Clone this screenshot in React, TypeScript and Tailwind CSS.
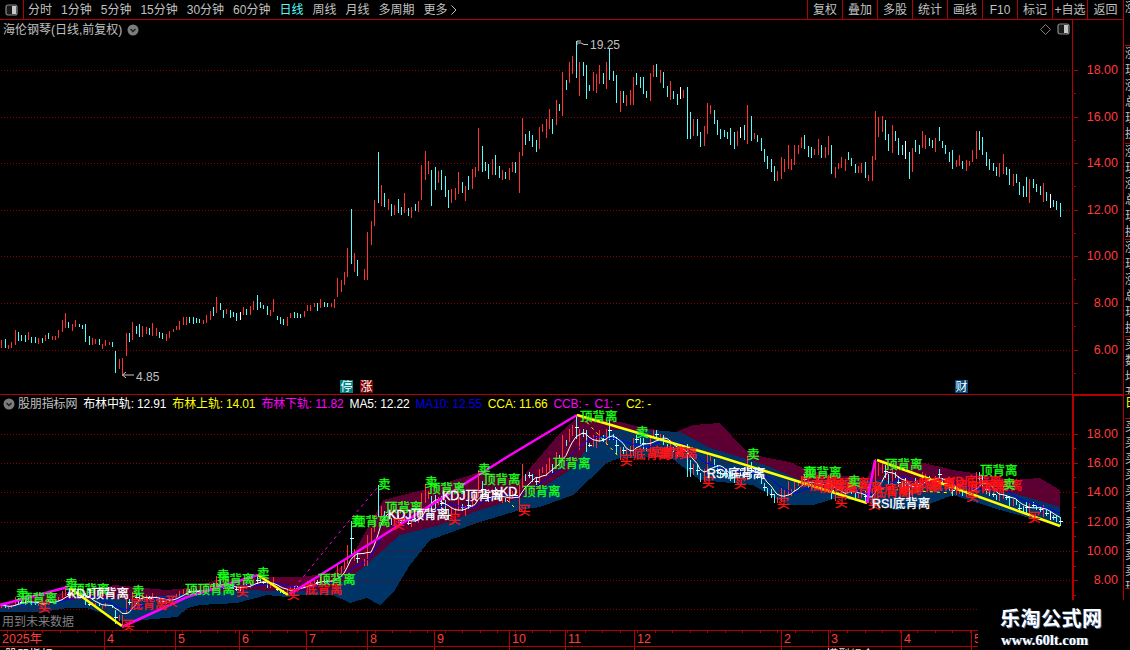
import React from "react";

type Bar = { x: number; t: number; b: number; c: string };

const raw9 =
  "r4,210,233 c16,207,235 r25,225,237 r34,216,235 r46,180,225 c55,186,212 c64,195,212 c76,195,217 r85,186,210 c94,201,219 c106,201,219 r115,204,221 c127,204,219 r136,195,212 c145,189,207 r155,198,210 r166,198,210 r175,180,204 r187,150,186 r196,129,174 c205,156,174 r216,162,183 r226,150,171 c236,162,171 c247,165,177 c256,162,216 c268,198,225 r277,204,225 r286,207,222 c298,207,225 r307,222,237 r316,210,228 r328,216,225 c337,216,231 c346,243,309 r358,267,297 r367,264,318 r379,189,258 c388,189,216 r397,156,210 c409,168,192 c418,162,201 r427,168,201 r439,171,192 c448,174,195 r457,159,198 r469,174,198 c478,186,204 c487,189,207 r499,192,213 r508,183,204 r520,177,186 r529,168,180 r538,153,180 r550,141,165 r559,141,165 c568,141,159 c580,141,162 c589,144,159 c598,147,159 r610,150,162 r619,135,159 r631,123,150 c640,111,138 r649,81,129 c661,99,120 c670,120,144 r679,117,132 c691,120,144 c700,126,141 c709,129,153 w721,126,150 r730,111,135 c739,117,135 r751,108,135 r760,93,120 c772,75,120 c781,96,114 c790,105,117 c802,108,135 r811,120,138 r820,87,126 c832,138,150 c841,141,162 c850,147,165 r862,141,168 r871,129,144 c883,126,144 c892,129,144 c901,132,144 r913,123,141 r922,105,123 r931,105,123 r943,99,111 c952,99,123 r961,87,114 c973,96,111 c982,99,111 r994,99,111 r1003,87,114 r1012,24,81 r1024,30,66 r1033,6,45";
const raw8 =
  "r22,624,711 c34,507,672 r43,639,696 c52,660,708 r73,687,720 r82,576,720 r94,543,615 r103,480,558 c115,336,490 r124,435,498 c133,459,501 r145,477,510 c154,492,528 r163,495,525 c175,477,519 c184,501,525 r193,459,519 c205,504,528 r214,501,534 c226,492,513 r235,483,516 r244,375,480 r256,333,420 r265,363,402 c274,390,498 c286,381,450 r295,393,429 c304,390,450 c316,408,471 c325,450,504 r334,447,489 r346,444,480 r355,396,462 c367,426,459 r376,438,483 c385,408,450 r397,387,447 r406,381,411 r415,264,393 c427,318,396 c436,366,393 c445,372,417 r457,357,405 c466,345,405 c478,378,414 r487,390,420 c496,396,417 r508,384,420 r517,366,396 c526,366,399 r538,336,459 r547,234,348 c556,282,315 c568,273,303 c577,285,321 c589,300,336 r598,261,327 r607,252,276 r619,237,294 r628,207,267 c637,237,282 r649,180,255 c658,192,213 r667,96,228 c679,120,150 r688,66,129 r697,48,102 c709,3,114 r718,66,168 c730,66,108 c739,75,177 c748,135,153 r760,96,153 r769,102,159 r778,75,132 c790,99,132 r799,66,147 c808,27,120 c820,93,123 c829,105,189 r841,153,216 c850,153,189 r859,165,198 r871,150,195 r880,111,195 c889,99,135 c901,111,144 c910,111,162 c919,153,174 r931,99,183 r940,75,111 c949,72,111 r961,90,129 c970,96,144 c982,138,171 r991,123,180 c1000,153,177 c1012,162,195 w1021,141,177 r1030,150,174 c1042,141,297";
const raw10 =
  "c1,36,117 r10,57,108 c22,57,108 c31,96,141 r43,78,138 r52,9,102 r61,15,42 c73,30,72 c82,60,105 c91,87,117 c103,90,111 c112,96,117 c121,84,135 c133,96,147 r142,93,138 w151,81,114 c163,75,120 r172,15,132 c184,48,123 r193,99,117 c202,105,126 c214,114,153 c223,147,186 c232,168,207 c244,177,216 c253,198,243 r262,213,243 r274,171,237 r283,177,216 r295,135,207 r304,177,210 r313,135,195 r325,135,162 r334,111,144 c343,105,147 c355,138,171 c364,141,174 r373,147,165 r385,117,165 c394,135,174 r406,141,174 r415,108,165 c424,135,222 r436,201,234 r445,189,207 r454,171,204 r466,177,213 c475,156,180 c484,174,198 c496,192,219 r505,198,219 r514,189,219 c526,186,234 r535,225,243 r547,168,243 r556,33,180 r565,51,111 r577,48,96 c586,60,120 c595,102,153 r607,75,159 c616,93,123 c625,114,165 c637,135,165 w646,123,177 c658,156,237 r667,144,216 c676,120,156 c688,135,162 r697,93,144 r706,105,147 c718,114,138 c727,120,144 r736,114,156 c748,81,123 c757,123,144 c766,135,162 c778,156,186 c787,150,207 r799,180,201 r808,165,198 c817,183,207 r829,180,213 r838,183,198 r847,150,186 r859,93,177 c868,93,150 c877,111,165 c889,156,198 c898,177,210 c910,189,213 c919,201,228 r928,189,231 r940,162,222 c949,201,225 c958,207,255 r970,222,258 c979,222,249 c988,246,285 c1000,258,291 c1009,231,291 r1018,237,309 c1030,237,264 c1039,252,276 c1051,258,285 r1060,249,306 c1069,276,303 w1081,282,324 c1090,300,321 c1099,303,330 c1111,309,351";

const parse = (s: string, ox: number, oy: number): Bar[] =>
  s.split(" ").map((e) => {
    const [a, t, b] = e.split(",");
    return {
      c: a[0],
      x: Math.round(ox + Number(a.slice(1)) / 3),
      t: oy + Number(t) / 3,
      b: oy + Number(b) / 3,
    };
  });

const bars: Bar[] = [...parse(raw9, 0, 270), ...parse(raw8, 340, 40), ...parse(raw10, 690, 100)];
const toLow = (y: number) => 433.5 + (y - 70) * 0.6285;

const colorOf: Record<string, string> = { r: "#ff3232", c: "#54fcfc", w: "#ffffff" };

const barPath = (key: string, low: boolean) =>
  bars
    .filter((b) => b.c === key)
    .map((b) => {
      const t = low ? toLow(b.t) : b.t;
      const e = low ? toLow(b.b) : b.b;
      return `M${b.x + 0.5} ${t.toFixed(1)}V${e.toFixed(1)}`;
    })
    .join("");

const ticksPath = bars
  .filter((b, i) => b.c !== "r" && i % 2 === 0)
  .map((b) => {
    const y = Math.round(toLow((b.t + b.b) / 2)) + 0.5;
    return `M${b.x - 1} ${y}H${b.x + 3}`;
  })
  .join("");

const maLine = (n: number) => {
  const mids = bars.map((b) => (b.t + b.b) / 2);
  return bars
    .map((b, i) => {
      const s = mids.slice(Math.max(0, i - n + 1), i + 1);
      const m = s.reduce((a, v) => a + v, 0) / s.length;
      return `${b.x},${toLow(m).toFixed(1)}`;
    })
    .join(" ");
};

const maroonTop =
  "0,603 40,596 70,592 100,590 113,585 135,587 166,590 190,588 217,580 267,577 300,577 333,573 350,560 383,500 423,490 480,472 520,480 560,433 580,415 620,422 640,427 673,433 693,425 720,423 745,450 763,457 790,462 807,470 837,475 867,478 877,460 920,462 953,470 973,473 1013,480 1040,478 1060,490";
const boundary =
  "0,607 60,600 110,598 130,600 170,595 250,590 290,592 330,590 360,570 400,535 440,525 480,510 530,495 570,470 590,445 610,430 640,430 680,432 710,448 763,464 800,480 880,480 953,486 1013,493 1060,507";
const blueBottom =
  "0,612 43,612 67,608 87,608 107,615 127,623 143,620 177,617 188,608 200,605 237,603 267,595 287,597 300,595 333,595 350,603 367,598 380,605 395,590 410,565 430,540 480,522 520,510 540,507 573,495 607,463 620,458 670,457 700,480 753,485 773,497 790,505 813,505 837,498 873,503 897,510 927,505 953,495 1000,510 1060,526";
const rev = (s: string) => s.split(" ").reverse().join(" ");

type Label = [string, number, number, string];
const G = "#19ff19";
const R = "#ff1414";
const W = "#ffffff";
const labels: Label[] = [
  ["卖", 16, 595, G],
  ["顶背离", 20, 599, G],
  ["买", 38, 608, R],
  ["卖", 65, 585, G],
  ["顶背离", 72, 590, G],
  ["KDJ顶背离", 68, 594, W],
  ["卖", 132, 592, G],
  ["底背离", 130, 605, R],
  ["买", 122, 626, R],
  ["买", 165, 602, R],
  ["顶顶背离", 185, 590, G],
  ["卖", 217, 576, G],
  ["顶背离", 217, 580, G],
  ["卖", 257, 574, G],
  ["买", 236, 592, R],
  ["买", 287, 595, R],
  ["底背离", 305, 590, R],
  ["顶背离", 318, 580, G],
  ["卖", 351, 522, G],
  ["顶背离", 353, 522, G],
  ["卖", 378, 485, G],
  ["顶背离", 385, 508, G],
  ["KDJ顶背离", 388, 515, W],
  ["买", 392, 525, R],
  ["买", 448, 520, R],
  ["卖", 425, 483, G],
  ["顶背离", 428, 489, G],
  ["KDJ顶背离", 442, 496, W],
  ["卖", 478, 470, G],
  ["顶背离", 483, 480, G],
  ["KD", 500, 492, W],
  ["顶背离", 523, 492, G],
  ["买", 518, 511, R],
  ["顶背离", 553, 464, G],
  ["顶背离", 580, 417, G],
  ["卖", 636, 433, G],
  ["买", 620, 461, R],
  ["底背离", 633, 455, R],
  ["底背离", 650, 453, R],
  ["底背离", 660, 454, R],
  ["买", 702, 483, R],
  ["RSI底背离", 707, 474, W],
  ["卖", 747, 455, G],
  ["买", 734, 484, R],
  ["买", 777, 504, R],
  ["底背离", 800, 482, R],
  ["底背离", 810, 486, R],
  ["底背离", 820, 488, R],
  ["底背离", 832, 484, R],
  ["底背离", 845, 488, R],
  ["卖", 803, 473, G],
  ["顶背离", 804, 473, G],
  ["卖", 848, 482, G],
  ["买", 835, 503, R],
  ["买", 868, 505, R],
  ["底背离", 873, 493, R],
  ["底背离", 884, 490, R],
  ["底背离", 900, 487, R],
  ["底背离", 918, 484, R],
  ["底背离", 930, 486, R],
  ["KD底背离", 947, 482, R],
  ["底背离", 967, 488, R],
  ["底背离", 985, 486, R],
  ["RSI底背离", 872, 504, W],
  ["顶背离", 885, 465, G],
  ["顶背离", 980, 471, G],
  ["卖", 1003, 485, G],
  ["买", 966, 497, R],
  ["买", 1028, 518, R],
];

const toolLeft = ["分时", "1分钟", "5分钟", "15分钟", "30分钟", "60分钟", "日线", "周线", "月线", "多周期"];
const toolRight = ["复权", "叠加", "多股", "统计", "画线", "F10", "标记", "+自选", "返回"];

type Leg = { text: string; color: string };
const legend: Leg[] = [
  { text: "布林中轨: 12.91", color: "#ffffff" },
  { text: "布林上轨: 14.01", color: "#ffff00" },
  { text: "布林下轨: 11.82", color: "#ff00ff" },
  { text: "MA5: 12.22", color: "#ffffff" },
  { text: "MA10: 12.55", color: "#0000e8" },
  { text: "CCA: 11.66", color: "#ffff00" },
  { text: "CCB: -", color: "#ff00ff" },
  { text: "C1: -", color: "#ff00ff" },
  { text: "C2: -", color: "#ffff00" },
];

const DownDot = () => (
  <svg width="12" height="12" viewBox="0 0 12 12" className="shrink-0">
    <circle cx="6" cy="6" r="5.5" fill="#7c7c7c" />
    <path d="M3.5 5l2.5 2.5L8.5 5" fill="none" stroke="#1c1c1c" strokeWidth="1.3" />
  </svg>
);

const PanelIcon = () => (
  <svg width="13" height="12" viewBox="0 0 13 12" className="shrink-0">
    <rect x="1" y="1" width="11" height="10" rx="2" fill="#1a1a1a" stroke="#8a8a8a" strokeWidth="1.2" />
    <rect x="7" y="2" width="4" height="8" fill="#c8c8c8" />
  </svg>
);

const Grid = ({ ys }: { ys: number[] }) => (
  <g stroke="#8c0000" strokeDasharray="1 2" shapeRendering="crispEdges">
    {ys.map((y) => (
      <line key={y} x1="1" x2="1072" y1={Math.round(y) + 0.5} y2={Math.round(y) + 0.5} />
    ))}
  </g>
);

const Axis = ({
  majors,
  top,
  height,
}: {
  majors: [string, number][];
  top: number;
  height: number;
}) => {
  const step = majors[1][1] - majors[0][1];
  return (
    <svg width="49" height={height} viewBox={`1074 ${top} 49 ${height}`} className="block">
      <g stroke="#b40000" shapeRendering="crispEdges">
        {majors.map(([l, y]) => (
          <g key={l}>
            <line x1="1074" x2="1078" y1={Math.round(y) + 0.5} y2={Math.round(y) + 0.5} />
            <line x1="1074" x2="1076" y1={Math.round(y + step / 2) + 0.5} y2={Math.round(y + step / 2) + 0.5} />
          </g>
        ))}
      </g>
      {majors.map(([l, y]) => (
        <text key={l} x="1118" y={y} fill="#ff3c3c" fontSize="12.5" textAnchor="end" dominantBaseline="central">
          {l}
        </text>
      ))}
    </svg>
  );
};

const railTop = ["涨幅", "现价", "涨跌", "总量", "现量", "换手"];
const RailGroup = ({ h, color = "#c0c0c0", rows = railTop }: { h: number; color?: string; rows?: string[] }) => (
  <div className="overflow-hidden border-b border-[#b40000] text-[12px] leading-[16px] whitespace-nowrap" style={{ height: h, color }}>
    {rows.map((r, i) => (
      <div key={i}>{r}</div>
    ))}
  </div>
);

const monthSeps: [number, string][] = [
  [104, "4"],
  [175, "5"],
  [239, "6"],
  [306, "7"],
  [367, "8"],
  [434, "9"],
  [509, "10"],
  [565, "11"],
  [634, "12"],
  [781, "2"],
  [828, "3"],
  [901, "4"],
  [971, "5"],
];

export default function App() {
  const tickXs = Array.from({ length: 57 }, (_, i) => 7 + i * 17.5);
  return (
    <div className="relative flex h-[650px] w-[1130px] overflow-hidden bg-black font-['Liberation_Sans','Noto_Sans_CJK_SC',sans-serif] text-[12px] text-[#c0c0c0]">
      <div className="flex w-[1123px] shrink-0 flex-col">
        {/* toolbar */}
        <div className="flex h-[20px] shrink-0 items-stretch border-b border-[#b40000]">
          <div className="flex w-[24px] items-center justify-center border-r border-[#b40000]">
            <PanelIcon />
          </div>
          <div className="flex flex-1 items-center gap-[9px] pl-[4px] leading-none">
            {toolLeft.map((t) => (
              <span key={t} className={t === "日线" ? "text-[#54fcfc]" : "text-[#c0c0c0]"}>
                {t}
              </span>
            ))}
            <span className="flex items-center gap-[3px]">
              更多
              <svg width="6" height="10" viewBox="0 0 6 10">
                <path d="M0.5 0.5l4.5 4.5l-4.5 4.5" fill="none" stroke="#c0c0c0" />
              </svg>
            </span>
          </div>
          <div className="flex">
            {toolRight.map((t, i) => (
              <div
                key={t}
                className={`flex items-center justify-center border-l border-[#b40000] leading-none ${
                  i === toolRight.length - 1 ? "w-[36px]" : "w-[35px]"
                }`}
              >
                {t}
              </div>
            ))}
          </div>
        </div>

        {/* upper chart */}
        <div className="flex h-[374px] shrink-0">
          <div className="relative w-[1072px] shrink-0">
            <svg width="1072" height="374" viewBox="0 20 1072 374" className="block">
              <Grid ys={[70, 116.5, 163, 209.5, 256, 302.5, 349.5]} />
              <g fill="none" shapeRendering="crispEdges">
                {["r", "c", "w"].map((k) => (
                  <path key={k} d={barPath(k, false)} stroke={colorOf[k]} />
                ))}
              </g>
              <g fill="none" stroke="#c8c8c8">
                <path d="M577 45V41H581M578 43H581L584 44.5L588 44.5" />
                <path d="M134 375H123M126 372L122.5 375L126 378" />
              </g>
              <text x="590" y="45" fill="#c0c0c0" fontSize="12" dominantBaseline="central">
                19.25
              </text>
              <text x="136" y="377" fill="#c0c0c0" fontSize="12" dominantBaseline="central">
                4.85
              </text>
            </svg>
            <div className="absolute left-[3px] top-[3px] flex items-center gap-[5px] leading-[14px]">
              <span>海伦钢琴(日线,前复权)</span>
              <DownDot />
            </div>
            <div className="absolute right-[2px] top-[3px] flex items-center gap-[6px]">
              <svg width="11" height="11" viewBox="0 0 11 11">
                <path d="M5.5 0.5L10.5 5.5L5.5 10.5L0.5 5.5Z" fill="none" stroke="#7c7c7c" />
              </svg>
              <PanelIcon />
            </div>
            <span className="absolute left-[340px] top-[360px] flex h-[13px] w-[13px] items-center justify-center bg-[#008080] text-[12px] leading-none text-white">
              停
            </span>
            <span className="absolute left-[360px] top-[360px] flex h-[13px] w-[13px] items-center justify-center bg-[#800000] text-[12px] leading-none text-white">
              涨
            </span>
            <span className="absolute left-[955px] top-[360px] flex h-[13px] w-[13px] items-center justify-center bg-[#004a80] text-[12px] leading-none text-white">
              财
            </span>
          </div>
          <div className="w-[51px] shrink-0 border-l border-[#b40000] pl-[1px]">
            <Axis
              top={20}
              height={374}
              majors={[
                ["18.00", 70],
                ["16.00", 116.5],
                ["14.00", 163],
                ["12.00", 209.5],
                ["10.00", 256],
                ["8.00", 302.5],
                ["6.00", 349.5],
              ]}
            />
          </div>
        </div>

        {/* lower chart */}
        <div className="flex h-[236px] shrink-0 border-t border-[#b40000]">
          <div className="relative w-[1072px] shrink-0">
            <svg width="1072" height="235" viewBox="0 395 1072 235" className="block">
              <polygon points={`${maroonTop} ${rev(boundary)}`} fill="#5c0033" shapeRendering="crispEdges" />
              <polygon points={`${boundary} ${rev(blueBottom)}`} fill="#003366" shapeRendering="crispEdges" />
              <Grid ys={[433.5, 462.5, 492, 521.5, 551, 580, 609]} />
              <g fill="none" shapeRendering="crispEdges">
                {["r", "c", "w"].map((k) => (
                  <path key={k} d={barPath(k, true)} stroke={colorOf[k]} />
                ))}
                <path d={ticksPath} stroke="#ffffff" />
              </g>
              <polyline points={maLine(10)} fill="none" stroke="#0000ff" />
              <polyline points={maLine(5)} fill="none" stroke="#ffffff" />
              <g fill="none" strokeDasharray="3 4" strokeWidth="1">
                <polyline points="290,593 343,528 378,487" stroke="#ff00ff" />
                <polyline points="507,500 517,510" stroke="#ffff00" />
                <polyline points="582,417 620,458" stroke="#ffff00" />
                <polyline points="860,487 900,490 953,493" stroke="#ffff00" />
              </g>
              <g fill="none" strokeWidth="2.5" strokeLinejoin="round">
                <polyline points="0,605 68,587" stroke="#ff00ff" />
                <polyline points="70,588 122,626" stroke="#ffff00" />
                <polyline points="122,627 187,597 258,575" stroke="#ff00ff" />
                <polyline points="258,575 288,595" stroke="#ffff00" />
                <polyline points="290,594 360,550 507,457 577,415" stroke="#ff00ff" />
                <polyline points="577,415 720,457 867,503" stroke="#ffff00" />
                <polyline points="867,503 875,460" stroke="#ff00ff" />
                <polyline points="877,460 1060,526" stroke="#ffff00" />
              </g>
              {labels.map(([t, x, y, c], i) => (
                <text
                  key={i}
                  x={x}
                  y={y}
                  fill={c}
                  stroke={c}
                  strokeWidth="0.3"
                  fontSize="12.5"
                  dominantBaseline="central"
                >
                  {t}
                </text>
              ))}
              <text x="2" y="622" fill="#808080" fontSize="12" dominantBaseline="central">
                用到未来数据
              </text>
            </svg>
            <div className="absolute left-[3px] top-[2px] flex items-center gap-[6px] leading-[14px] tracking-[-0.15px]">
              <span className="flex items-center gap-[3px] text-[#c0c0c0]">
                <DownDot />
                股朋指标网
              </span>
              {legend.map((l) => (
                <span key={l.text} style={{ color: l.color }}>
                  {l.text}
                </span>
              ))}
            </div>
          </div>
          <div className="w-[51px] shrink-0 border-l-2 border-t border-[#b40000]">
            <Axis
              top={396}
              height={233}
              majors={[
                ["18.00", 433.5],
                ["16.00", 462.5],
                ["14.00", 492],
                ["12.00", 521.5],
                ["10.00", 551],
                ["8.00", 580],
              ]}
            />
          </div>
        </div>

        {/* date axis */}
        <div className="h-[20px] shrink-0">
          <svg width="1123" height="20" viewBox="0 630 1123 20" className="block">
            <g stroke="#b40000" shapeRendering="crispEdges">
              <line x1="0" x2="978" y1="630.5" y2="630.5" />
              <line x1="0" x2="978" y1="646.5" y2="646.5" />
              {tickXs.map((x) => (
                <line key={x} x1={Math.round(x) + 0.5} x2={Math.round(x) + 0.5} y1="630" y2="633" />
              ))}
              {monthSeps.map(([x, l]) => (
                <g key={x + l}>
                  <line x1={x + 0.5} x2={x + 0.5} y1="630" y2="647" />
                  <line x1={x + 0.5} x2={x + 0.5} y1="647" y2="650" />
                </g>
              ))}
            </g>
            <text x="2" y="639" fill="#ff3c3c" fontSize="12.5" dominantBaseline="central">
              2025年
            </text>
            {monthSeps.map(([x, l]) => (
              <text key={x + l} x={x + 3} y="639" fill="#ff3c3c" fontSize="12.5" dominantBaseline="central">
                {l}
              </text>
            ))}
            <text x="5" y="659" fill="#ffffff" fontSize="12">
              股朋指标
            </text>
            <text x="826" y="659" fill="#d8d8d8" fontSize="12">
              模型组合
            </text>
          </svg>
        </div>
      </div>

      {/* far right list, cut off by the window edge */}
      <div className="flex w-[7px] shrink-0 flex-col overflow-hidden border-l border-[#b40000] pl-[1px]">
        <RailGroup h={46} rows={["", "", "涨幅"]} />
        <RailGroup h={98} />
        <RailGroup h={96} />
        <RailGroup h={97} />
        <RailGroup h={58} rows={["买卖", "数量", "均价", "开盘"]} />
        <RailGroup h={24} color="#ffff00" rows={["", "日线"]} />
        <RailGroup h={170} rows={["买一", "买二", "买三", "买四", "买五", "卖一", "卖二", "卖三", "卖四", "卖五", "现价"]} />
      </div>

      {/* watermark */}
      <div className="absolute bottom-0 right-0 flex h-[50px] w-[152px] flex-col items-start bg-black pl-[22px] pt-[8px]">
        <span className="text-[20px] font-bold leading-[22px] tracking-[0.5px] text-white [text-shadow:1px_1px_0_#4a6a9a]">
          乐淘公式网
        </span>
        <span className="mt-[3px] ml-[1px] font-['Liberation_Serif',serif] text-[14.5px] font-bold leading-[14px] text-white [text-shadow:1px_0_0_#4a6a9a]">
          www.60lt.com
        </span>
      </div>
    </div>
  );
}
